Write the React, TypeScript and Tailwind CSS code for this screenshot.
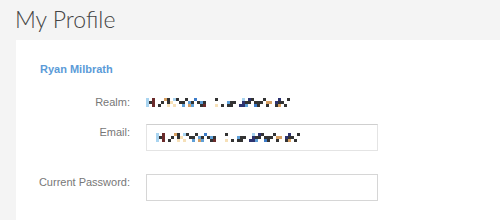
import React from "react";

const COLORS: Record<string, string> = {
  k: "#333333",
  b: "#a9d4f0",
  r: "#6b2b2b",
  t: "#d7a062",
  c: "#f6e0b8",
  u: "#3d7cc9",
  n: "#2d3370",
  m: "#5fa0d8",
  g: "#5d7f88",
};

const ROWS = [
  "b.r...tk.bk..k..u......k........b.nk...k....n..k..",
  "bkr..k.kc..kk.mk.kmk.......mkk..nkk.kkk.tt.nkk....",
  "b.r.k..c.c..m.tm..kr...c.k.kk..nnm..uk..k..kt.k...",
];

function Mosaic() {
  const s = 3;
  const w = ROWS[0].length * s;
  return (
    <svg width={w} height={9} viewBox={`0 0 ${w} 9`} className="block">
      {ROWS.flatMap((row, y) =>
        row.split("").map((ch, x) =>
          ch === "." ? null : (
            <rect key={`${x}-${y}`} x={x * s} y={y * s} width={s} height={s} fill={COLORS[ch]} />
          )
        )
      )}
    </svg>
  );
}

function Label({ children }: { children: React.ReactNode }) {
  return (
    <div className="w-[90px] shrink-0 flex justify-end whitespace-nowrap text-[11px] leading-[16px] text-[#777]">
      {children}
    </div>
  );
}

export default function App() {
  return (
    <div className="w-[500px] h-[220px] bg-[#f4f4f4] overflow-hidden" style={{ fontFamily: "'Liberation Sans', Arial, sans-serif" }}>
      <div className="h-[40px] pl-[15px] pt-[4px]">
        <h1 className="text-[23px] leading-[30px] font-light text-[#444]" style={{ fontFamily: "Lato, Roboto, sans-serif" }}>
          My Profile
        </h1>
      </div>
      <div className="ml-[16px] bg-white h-[180px] pl-[24px] pt-[21px]">
        <div className="text-[11px] leading-[16px] font-bold text-[#5b9bd8]">Ryan Milbrath</div>
        <div className="mt-[17px] flex items-center gap-[16px] h-[16px]">
          <Label>Realm:</Label>
          <Mosaic />
        </div>
        <div className="mt-[14px] flex items-start gap-[16px]">
          <Label>Email:</Label>
          <div className="w-[232px] h-[27px] border border-[#e4e4e4] border-t-[#cfcfcf] pl-[9px] pt-[8px]">
            <Mosaic />
          </div>
        </div>
        <div className="mt-[23px] flex items-start gap-[16px]">
          <Label>Current Password:</Label>
          <div className="w-[232px] h-[27px] border border-[#d6d6d6] bg-white" />
        </div>
      </div>
    </div>
  );
}
